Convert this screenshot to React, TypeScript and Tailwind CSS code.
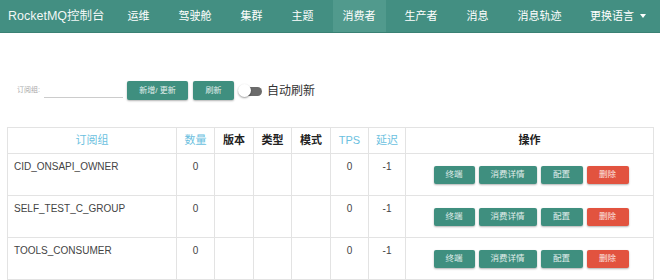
import React from "react"

const nav = ["运维", "驾驶舱", "集群", "主题", "消费者", "生产者", "消息", "消息轨迹"]

const rows = [
  { group: "CID_ONSAPI_OWNER", count: 0, tps: 0, delay: -1 },
  { group: "SELF_TEST_C_GROUP", count: 0, tps: 0, delay: -1 },
  { group: "TOOLS_CONSUMER", count: 0, tps: 0, delay: -1 },
]

const font = { fontFamily: '"Liberation Sans", "Noto Sans CJK SC", sans-serif' }

function ActionButton({ label, danger }: { label: string; danger?: boolean }) {
  return (
    <button
      className={`h-[18px] rounded-[2px] text-[8.5px] text-white/85 shadow-[0_1px_2px_rgba(0,0,0,0.3)] ${
        danger ? "bg-[#e2533f]" : "bg-[#3f8f7f]"
      }`}
    >
      {label}
    </button>
  )
}

export default function App() {
  return (
    <div className="w-[660px] h-[280px] overflow-hidden bg-white" style={font}>
      <header className="h-[33px] bg-[#438f82] border-b border-[#3a8174] flex items-center text-white whitespace-nowrap">
        <div className="shrink-0 w-[113px] pl-2 text-[12.5px] text-white/95">RocketMQ控制台</div>
        <nav className="flex h-full items-stretch shrink-0">
          {nav.map((n) => (
            <div
              key={n}
              className={`flex items-center px-[10px] mx-[4.5px] text-[11px] ${
                n === "消费者" ? "bg-[#519a8d]" : ""
              }`}
            >
              {n}
            </div>
          ))}
        </nav>
        <div className="ml-auto mr-[14px] flex items-center gap-[6px] text-[11px] shrink-0">
          更换语言
          <span className="w-0 h-0 border-x-[3px] border-x-transparent border-t-[4px] border-t-white" />
        </div>
      </header>

      <div className="flex items-center h-[19px] mt-[48px] pl-[17px]">
        <span className="text-[7px] text-[#aaa] w-[27px]">订阅组:</span>
        <div className="w-[79px] h-[14px] border-b border-[#ccc]" />
        <button className="ml-[4px] w-[61px] h-[19px] rounded-[2px] bg-[#3f8f7f] text-white/85 text-[8px] shadow-[0_1px_2px_rgba(0,0,0,0.3)]">
          新增/ 更新
        </button>
        <button className="ml-[5px] w-[41px] h-[19px] rounded-[2px] bg-[#3f8f7f] text-white/85 text-[8px] shadow-[0_1px_2px_rgba(0,0,0,0.3)]">
          刷新
        </button>
        <div className="relative ml-[4px] w-[24px] h-[14px]">
          <div className="absolute left-[6px] top-[3px] w-[18px] h-[9px] rounded-full bg-[#6b6b6b]" />
          <div className="absolute left-0 top-0 w-[13px] h-[13px] rounded-full bg-white shadow-[0_1px_2px_rgba(0,0,0,0.4)]" />
        </div>
        <span className="ml-[5px] text-[12px] text-[#333]">自动刷新</span>
      </div>

      <div className="pl-[7px] pt-[27px]">
        <table className="border-collapse text-[10px] text-[#444] table-fixed w-[646px]">
          <colgroup>
            <col className="w-[169px]" />
            <col className="w-[38px]" />
            <col className="w-[39px]" />
            <col className="w-[38px]" />
            <col className="w-[39px]" />
            <col className="w-[38px]" />
            <col className="w-[37px]" />
            <col className="w-[248px]" />
          </colgroup>
          <thead className="text-[11px]">
            <tr className="h-[26px]">
              <th className="border border-[#e3e3e3] font-normal text-[#6bbfe0]">订阅组</th>
              <th className="border border-[#e3e3e3] font-normal text-[#6bbfe0]">数量</th>
              <th className="border border-[#e3e3e3] font-bold text-[#222]">版本</th>
              <th className="border border-[#e3e3e3] font-bold text-[#222]">类型</th>
              <th className="border border-[#e3e3e3] font-bold text-[#222]">模式</th>
              <th className="border border-[#e3e3e3] font-normal text-[#6bbfe0]">TPS</th>
              <th className="border border-[#e3e3e3] font-normal text-[#6bbfe0]">延迟</th>
              <th className="border border-[#e3e3e3] font-bold text-[#222]">操作</th>
            </tr>
          </thead>
          <tbody>
            {rows.map((r) => (
              <tr key={r.group} className="h-[42px]">
                <td className="border border-[#e3e3e3] align-top pt-[5px] pl-[6px]">{r.group}</td>
                <td className="border border-[#e3e3e3] align-top pt-[5px] text-center">{r.count}</td>
                <td className="border border-[#e3e3e3]" />
                <td className="border border-[#e3e3e3]" />
                <td className="border border-[#e3e3e3]" />
                <td className="border border-[#e3e3e3] align-top pt-[5px] text-center">{r.tps}</td>
                <td className="border border-[#e3e3e3] align-top pt-[5px] text-center">{r.delay}</td>
                <td className="border border-[#e3e3e3] align-middle">
                  <div className="flex justify-center pl-[3px]">
                    <div className="grid grid-cols-[41px_58px_42px_42px] gap-[4px]">
                      <ActionButton label="终端" />
                      <ActionButton label="消费详情" />
                      <ActionButton label="配置" />
                      <ActionButton label="删除" danger />
                    </div>
                  </div>
                </td>
              </tr>
            ))}
          </tbody>
        </table>
      </div>
    </div>
  )
}
